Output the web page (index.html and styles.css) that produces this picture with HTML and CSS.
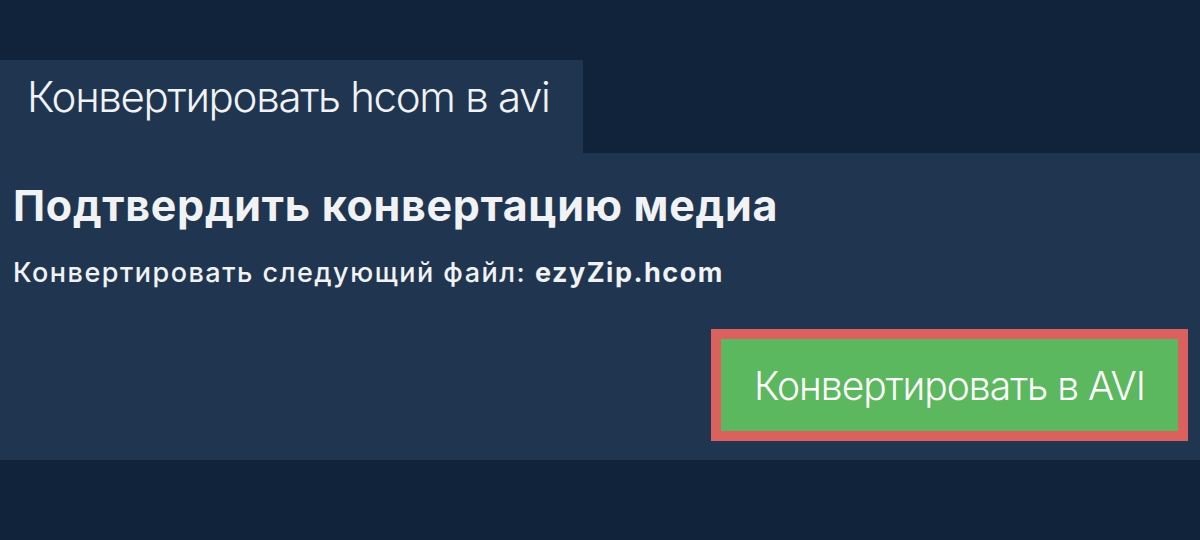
FILE: index.html
```html
<!DOCTYPE html>
<html lang="ru">

<head>
    <meta charset="UTF-8">
    <meta name="viewport" content="width=device-width, initial-scale=1.0">
    <title>Конвертировать hcom в avi</title>
    <link rel="stylesheet" href="styles.css">
</head>

<body>
    <div class="page">
        <div class="tab">Конвертировать hcom в avi</div>
        <div class="panel">
            <h2 class="title">Подтвердить конвертацию медиа</h2>
            <p class="file">Конвертировать следующий файл: <b>ezyZip.hcom</b></p>
            <div class="actions">
                <div class="outline">
                    <button class="convert">Конвертировать в AVI</button>
                </div>
            </div>
        </div>
    </div>
</body>

</html>
```

FILE: styles.css
```css
* {
    font-family: Inter, 'Noto Sans', sans-serif;
    box-sizing: border-box;
}

body {
    margin: 0;
    background-color: #10233a;
    color: #f0f2f4;
}

.page {
    padding-top: 60px;
}

.tab {
    width: 583px;
    height: 93px;
    padding: 12px 0 0 27px;
    background-color: #203650;
    font-size: 42px;
    line-height: 50px;
    font-weight: 300;
    letter-spacing: -1.3px;
}

.panel {
    height: 307px;
    padding: 27px 12px 0 13px;
    background-color: #203650;
}

.title {
    margin: 0;
    font-size: 43px;
    line-height: 50px;
    font-weight: 700;
    letter-spacing: 0.7px;
}

.file {
    margin: 27px 0 0;
    font-size: 27px;
    line-height: 32px;
    font-weight: 500;
    letter-spacing: 1.5px;
}

.file b {
    font-weight: 700;
}

.actions {
    display: flex;
    justify-content: flex-end;
    margin-top: 40px;
}

.outline {
    padding: 10px;
    background-color: #db615e;
}

.convert {
    width: 457px;
    height: 92px;
    border: none;
    background-color: #5cb85f;
    color: #fff;
    font-size: 39px;
    font-weight: 300;
    letter-spacing: -1px;
    cursor: pointer;
}
```
